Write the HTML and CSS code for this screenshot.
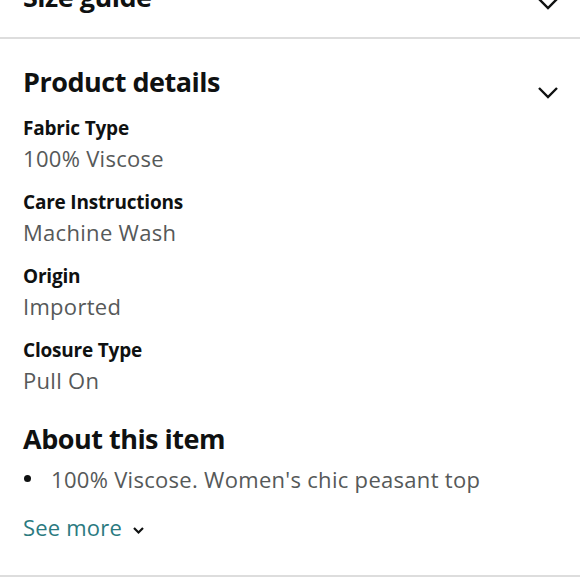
FILE: index.html
```html
<!DOCTYPE html>
<html>
<head>
<meta charset="utf-8">
<link rel="stylesheet" href="styles.css">
</head>
<body>
<div class="page">
  <section class="section section-top">
    <div class="section-head">
      <h2 class="title">Size guide</h2>
      <svg class="chev" width="22" height="13" viewBox="0 0 22 13"><path d="M2 2 L11 11 L20 2" fill="none" stroke="#0f1111" stroke-width="2.4"/></svg>
    </div>
  </section>
  <section class="section section-details">
    <div class="section-head">
      <h2 class="title">Product details</h2>
      <svg class="chev chev-low" width="22" height="13" viewBox="0 0 22 13"><path d="M2 2 L11 11 L20 2" fill="none" stroke="#0f1111" stroke-width="2.4"/></svg>
    </div>
    <dl class="specs">
      <div class="spec"><dt>Fabric Type</dt><dd>100% Viscose</dd></div>
      <div class="spec"><dt>Care Instructions</dt><dd>Machine Wash</dd></div>
      <div class="spec"><dt>Origin</dt><dd>Imported</dd></div>
      <div class="spec"><dt>Closure Type</dt><dd>Pull On</dd></div>
    </dl>
    <h2 class="title about">About this item</h2>
    <ul class="bullets">
      <li>100% Viscose. Women's chic peasant top</li>
    </ul>
    <a class="see-more" href="#">See more <svg class="mini-chev" width="13" height="9" viewBox="0 0 13 9"><path d="M2 2 L6.5 6.5 L11 2" fill="none" stroke="#0f1111" stroke-width="2.2"/></svg></a>
  </section>
</div>
</body>
</html>
```
FILE: styles.css
```css
html, body {
  margin: 0;
  padding: 0;
  background: #ffffff;
}
body {
  font-family: "Open Sans", "Noto Sans", sans-serif;
  color: #0f1111;
}
.page {
  width: 580px;
  height: 580px;
  overflow: hidden;
}
.section {
  padding: 0 22px 0 23px;
}
.section-top {
  margin-top: -21px;
  padding-bottom: 22px;
  border-bottom: 2px solid #dddddd;
}
.section-details {
  padding-top: 25px;
  padding-bottom: 33px;
  border-bottom: 2px solid #dddddd;
}
.section-head {
  display: flex;
  justify-content: space-between;
  align-items: flex-start;
}
.title {
  margin: 0;
  font-size: 27px;
  line-height: 36px;
  font-weight: 700;
  letter-spacing: -0.5px;
}
.chev {
  margin-top: 18px;
  margin-right: -1px;
}
.chev-low {
  margin-top: 22px;
}
.specs {
  margin: 13px 0 0 0;
  display: flex;
  flex-direction: column;
  gap: 14px;
}
.spec dt {
  font-size: 19px;
  line-height: 30px;
  font-weight: 700;
  letter-spacing: -0.2px;
}
.spec dd {
  margin: 0;
  font-size: 22px;
  line-height: 30px;
  letter-spacing: 0.3px;
  color: #565959;
}
.about {
  margin-top: 26px;
}
.bullets {
  margin: 7px 0 0 0;
  padding: 0;
  list-style: none;
}
.bullets li {
  position: relative;
  padding-left: 28px;
  font-size: 22px;
  line-height: 30px;
  letter-spacing: 0.3px;
  color: #565959;
}
.bullets li::before {
  content: "";
  position: absolute;
  left: 1px;
  top: 11px;
  width: 7px;
  height: 7px;
  border-radius: 50%;
  background: #0f1111;
}
.see-more {
  display: inline-flex;
  align-items: center;
  gap: 10px;
  margin-top: 18px;
  font-size: 22px;
  line-height: 30px;
  letter-spacing: 0.2px;
  color: #2b7a80;
  text-decoration: none;
}
.mini-chev {
  margin-top: 6px;
}
```
